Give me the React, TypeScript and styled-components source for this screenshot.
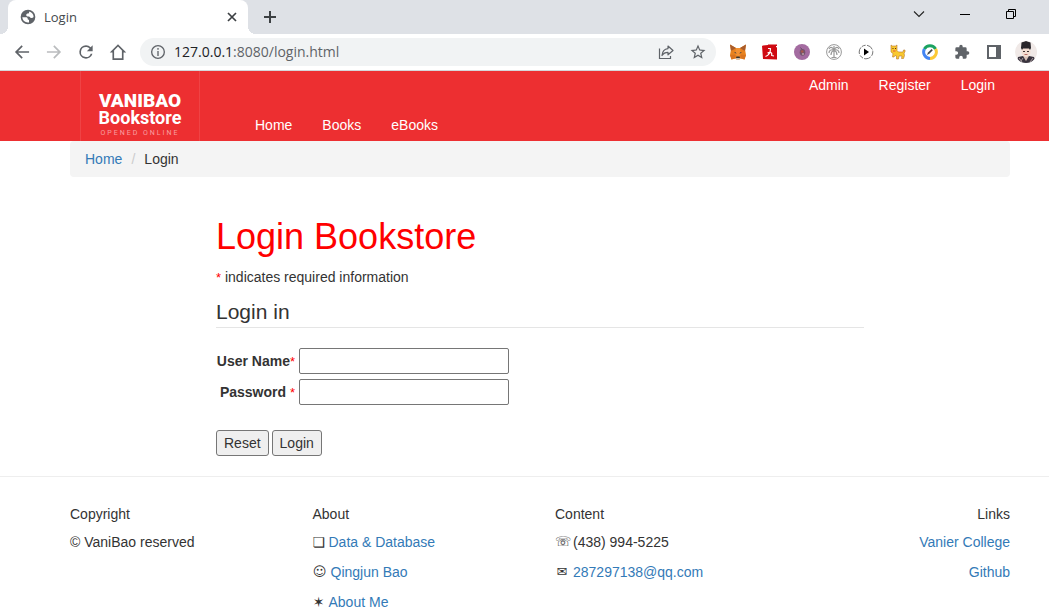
import React from 'react';
import styled, { createGlobalStyle } from 'styled-components';

const GlobalStyle = createGlobalStyle`
  *, *::before, *::after { box-sizing: border-box; }
  body {
    margin: 0;
    overflow: hidden;
    background: #fff;
    color: #333;
    font: 14px/20px "Liberation Sans", Arial, sans-serif;
  }
`;

/* ---------- browser window ---------- */

const TabStrip = styled.div`
  display: flex;
  align-items: center;
  height: 34px;
  padding: 0 8px;
  background: #dee1e6;
`;

const Tab = styled.div`
  position: relative;
  display: flex;
  align-items: center;
  gap: 8px;
  width: 240px;
  height: 34px;
  padding: 0 9px 0 12px;
  border-radius: 8px 8px 0 0;
  background: #fff;
  color: #45494d;
  font: 13px/16px "Open Sans", sans-serif;

  &::before, &::after {
    content: '';
    position: absolute;
    bottom: 0;
    width: 8px;
    height: 8px;
  }
  &::before {
    right: 100%;
    background: radial-gradient(circle at 0 0, transparent 8px, #fff 8px);
  }
  &::after {
    left: 100%;
    background: radial-gradient(circle at 100% 0, transparent 8px, #fff 8px);
  }
`;

const TabTitle = styled.span`
  flex: 1;
`;

const IconButton = styled.button<{ $width?: number }>`
  display: flex;
  flex: none;
  align-items: center;
  justify-content: center;
  width: ${p => p.$width ?? 32}px;
  height: 32px;
  padding: 0;
  border: 0;
  background: none;
  color: #5f6368;
`;

const WindowControls = styled.div`
  display: flex;
  margin: 0 7px 6px auto;
`;

const Toolbar = styled.div`
  display: flex;
  align-items: center;
  height: 37px;
  padding: 0 7px 0 6px;
  border-bottom: 1px solid #d5d7da;
  background: #fff;
`;

const AddressBar = styled.div`
  display: flex;
  flex: 1;
  align-items: center;
  height: 28px;
  margin: 0 6px;
  padding: 0 2px 0 10px;
  border-radius: 14px;
  background: #f1f3f4;
  color: #5f6368;
`;

const Url = styled.span`
  flex: 1;
  margin-left: 8px;
  font: 14px/20px "Open Sans", sans-serif;
`;

const Host = styled.span`
  color: #202124;
`;

/* ---------- bookstore page ---------- */

const Page = styled.div`
  --left: 70px;
  --right: 39px;
`;

const Header = styled.header`
  display: flex;
  height: 70px;
  padding: 0 var(--right) 0 80px;
  background: #ed2f31;
  overflow: hidden;
`;

const Logo = styled.a`
  display: flex;
  flex-direction: column;
  align-items: center;
  width: 120px;
  padding-top: 18px;
  border: solid #ef4345;
  border-width: 0 1px;
  color: #fff;
  font-family: Roboto, sans-serif;
  text-decoration: none;
`;

const LogoName = styled.span`
  height: 19px;
  font-size: 19px;
  font-weight: 900;
  line-height: 23px;
`;

const LogoShop = styled.span`
  height: 20px;
  font-size: 18px;
  font-weight: 700;
  line-height: 20px;
`;

const LogoTagline = styled.span`
  color: #f7a0a1;
  font-size: 7px;
  line-height: 10px;
  letter-spacing: 2px;
`;

const Nav = styled.nav<{ $side: 'main' | 'account' }>`
  display: flex;
  gap: 30px;
  ${p => p.$side === 'main'
    ? 'align-self: flex-end; padding: 0 0 6px 55px;'
    : 'align-self: flex-start; margin-left: auto; padding: 4px 15px 0 0;'}
`;

const NavLink = styled.a`
  color: #fff;
  text-decoration: none;
`;

const Link = styled.a`
  color: #337ab7;
  text-decoration: none;
`;

const Breadcrumb = styled.nav`
  display: flex;
  height: 36px;
  margin: 0 var(--right) 0 var(--left);
  padding: 8px 15px;
  border-radius: 4px;
  background: #f4f4f4;
`;

const Separator = styled.span`
  width: 22px;
  color: #ccc;
  text-align: center;
`;

const Main = styled.main`
  margin: 40px 185px 0 216px;
`;

const Title = styled.h1`
  margin: 0 0 10px;
  color: #f00;
  font-size: 36px;
  font-weight: 400;
  line-height: 40px;
`;

const Note = styled.p`
  margin: 0 0 10px;
`;

const Required = styled.span`
  color: #f00;
  font-size: 13px;
  font-weight: 400;
  line-height: 14px;
`;

const Fields = styled.fieldset`
  margin: 0;
  padding: 0;
  border: 0;
`;

const Legend = styled.legend`
  width: 100%;
  height: 31px;
  margin-bottom: 20px;
  padding: 0;
  border-bottom: 1px solid #e5e5e5;
  font-size: 21px;
  line-height: 30px;
`;

const FieldRow = styled.div`
  display: flex;
  align-items: center;
  gap: 4px;
  margin-bottom: 5px;
`;

const Label = styled.label`
  width: 79px;
  font-weight: 700;
  text-align: right;
  white-space: nowrap;
`;

const TextInput = styled.input`
  width: 210px;
  height: 26px;
  padding: 1px 4px;
  border: 1px solid #767676;
  border-radius: 2px;
  background: #fff;
  font: inherit;
`;

const Buttons = styled.div`
  display: flex;
  gap: 3px;
  margin-top: 20px;
`;

const Button = styled.button`
  height: 26px;
  padding: 1px 7px;
  border: 1px solid #767676;
  border-radius: 3px;
  background: #efefef;
  color: #333;
  font: inherit;
`;

const Footer = styled.footer`
  display: grid;
  grid-template-columns: repeat(4, 1fr);
  gap: 30px;
  margin-top: 20px;
  padding: 27px var(--right) 0 var(--left);
  border-top: 1px solid #eee;
`;

const FooterColumn = styled.section<{ $end?: boolean }>`
  display: flex;
  flex-direction: column;
  align-items: ${p => (p.$end ? 'flex-end' : 'flex-start')};
`;

const FooterTitle = styled.h2`
  margin: 0 0 10px;
  font-size: 14px;
  font-weight: 400;
`;

const FooterLine = styled.p`
  display: flex;
  align-items: center;
  gap: 4px;
  height: 16px;
  margin: 0 0 14px;
  line-height: 16px;
  white-space: nowrap;
`;

const Glyph = styled.span<{ $wide?: boolean }>`
  width: ${p => (p.$wide ? 14 : 12)}px;
  font-family: "DejaVu Sans", sans-serif;
  font-size: ${p => (p.$wide ? 13 : 14)}px;
  text-align: center;
`;

/* ---------- icons ---------- */

const Material = ({ d, size = 20, color = 'currentColor' }: { d: string; size?: number; color?: string }) => (
  <svg width={size} height={size} viewBox="0 0 24 24" fill={color} aria-hidden="true"><path d={d} /></svg>
);

const paths = {
  globe: 'M12 1a11 11 0 1 0 0 22 11 11 0 0 0 0-22zM3.500 12.500h5c2.500 0 3 .8 3 2.200 0 1.200.6 1.600 2 1.600v3.900C8 21 3.800 17.500 3.500 12.500zM20.400 12c-1 1.500-2.700 2-4.200 1.400-1.300-.5-1.500-2-3-2-2.300 0-3.900-.5-3.900-2.300 0-1.600 1.200-2.500 2.700-2.500 1.300 0 1.700-.8 1.700-3 4 .6 6.700 4.200 6.700 8.400z',
  back: 'M20.500 11H7.330l5.590-5.590L11.500 4l-8 8 8 8 1.410-1.410L7.330 13H20.500v-2z',
  forward: 'M12.500 4l-1.410 1.410L16.670 11H3.500v2h13.170l-5.580 5.590L12.500 20l8-8z',
  reload: 'M17.650 6.350A7.950 7.950 0 0 0 12 4a8 8 0 1 0 7.730 10h-2.080A6 6 0 1 1 12 6c1.660 0 3.140.69 4.220 1.780L13 11h7V4l-2.350 2.350z',
  home: 'M12 1.500L1 12.500h3.600V22.500h14.800V12.500H23L12 1.500zM17.200 20.300H6.800V10L12 4.800l5.200 5.200v10.300z',
  info: 'M11 6h2v2.500h-2zM11 10.500h2V18h-2zM12 1.500a10.500 10.500 0 1 0 0 21 10.500 10.500 0 0 0 0-21zm0 19a8.500 8.500 0 1 1 0-17 8.500 8.500 0 0 1 0 17z',
  star: 'M22 9.240l-7.190-.62L12 2 9.190 8.630 2 9.240l5.460 4.730L5.820 21 12 17.270 18.180 21l-1.630-7.030L22 9.240zM12 15.400l-3.760 2.270 1-4.280-3.320-2.880 4.380-.38L12 6.100l1.710 4.040 4.380.38-3.320 2.880 1 4.280L12 15.400z',
  puzzle: 'M20.500 11H19V7a2 2 0 0 0-2-2h-4V3.500a2.500 2.500 0 0 0-5 0V5H4a2 2 0 0 0-1.990 2v3.800H3.500a2.700 2.700 0 0 1 0 5.400H2V20a2 2 0 0 0 2 2h3.800v-1.500a2.700 2.700 0 0 1 5.400 0V22H17a2 2 0 0 0 2-2v-4h1.500a2.500 2.500 0 0 0 0-5z',
};

const CloseIcon = () => (
  <svg width="10" height="10" viewBox="0 0 10 10" stroke="#3c4043" strokeWidth="1.700"><path d="M1 1l8 8M9 1L1 9" /></svg>
);
const PlusIcon = () => (
  <svg width="12" height="12" viewBox="0 0 12 12" stroke="#3c4043" strokeWidth="2"><path d="M0 6h12M6 0v12" /></svg>
);
const ChevronIcon = () => (
  <svg width="12" height="8" viewBox="0 0 12 8" fill="none" stroke="#222" strokeWidth="1.100"><path d="M1 1.500l5 5 5-5" /></svg>
);
const MinimizeIcon = () => (
  <svg width="10" height="10" viewBox="0 0 10 10" stroke="#000"><path d="M0 5.500h10" /></svg>
);
const RestoreIcon = () => (
  <svg width="10" height="10" viewBox="0 0 10 10" fill="none" stroke="#000"><path d="M.5 2.500h7v7h-7zM2.500 2.500v-2h7v7h-2" /></svg>
);
const ShareIcon = () => (
  <svg width="16" height="16" viewBox="0 0 16 16" fill="none" stroke="#5f6368" strokeWidth="1.200">
    <path d="M1.500 4.500v10h11V12" />
    <path d="M10 2l5 4.500-5 4.300V8.300C7.200 8.300 5.300 9.300 4 11.500 4.300 7.800 6.200 5 10 4.600z" strokeLinejoin="round" />
  </svg>
);
const FoxIcon = () => (
  <svg width="16" height="16" viewBox="0 0 16 16">
    <path d="M0 .5L6 4h4l6-3.500-.8 6L16 11l-1.500 4.500-4-1-1 1h-3l-1-1-4 1L0 11l.8-4.500z" fill="#e8821e" />
    <path d="M0 .5L6 4 2 6.500l-1 0zM16 .5L10 4l4 2.500h1z" fill="#a85c2c" />
    <path d="M6 4h4l1 6-3 3-3-3z" fill="#f39132" />
    <path d="M0 11l5.500-.5V14l-4 1.500zM16 11l-5.500-.5V14l4 1.500z" fill="#d9741f" />
    <path d="M4 8l2 .5.4 1.500zM12 8l-2 .5-.4 1.500z" fill="#263746" />
    <path d="M6.500 12.500h3l.5 1.500H6z" fill="#35322f" />
    <path d="M6 14h4l-.5 1.500h-3z" fill="#c9bdb0" />
  </svg>
);
const AcrobatIcon = () => (
  <svg width="16" height="16" viewBox="0 0 16 16">
    <path d="M0 2l1-.5 5-.5v-.5h9V2h-1v1l1 .5V15.500L1 15z" fill="#cf0a12" />
    <path d="M6 4.500h2.500C8.500 8 6.500 11.500 3.500 12.500M5.500 9c2-1 3-1 4.200.2V11.500l2.300.5" fill="none" stroke="#fff" strokeWidth="1.200" strokeLinejoin="round" />
  </svg>
);
const PurpleIcon = () => (
  <svg width="16" height="16" viewBox="0 0 16 16">
    <circle cx="8" cy="8" r="8" fill="#a36ba0" />
    <ellipse cx="8.500" cy="8.300" rx="2.800" ry="3.400" fill="#74546d" />
    <path d="M6.500 3.500l1.500 2" stroke="#634b60" fill="none" />
    <circle cx="8.200" cy="7.500" r="1.300" fill="#a8564b" /><circle cx="9" cy="10" r="1" fill="#b9a0a5" />
  </svg>
);
const PalmIcon = () => (
  <svg width="16" height="16" viewBox="0 0 16 16" fill="none" stroke="#999">
    <circle cx="8" cy="8" r="7.400" />
    <path d="M8 6v8M8 6C6 2.500 4 3 3 5M8 6c2-3.500 4-3 5-1M8 6C4.500 5 3 7 3 9M8 6c3.500-1 5 1 5 3M8 6c-2 1-3 3-3 5M8 6c2 1 3 3 3 5M8 6V2M5.500 13.500h5" strokeWidth="1.200" />
  </svg>
);
const PlayIcon = () => (
  <svg width="16" height="16" viewBox="0 0 16 16">
    <circle cx="8" cy="8" r="6.800" fill="none" stroke="#777" strokeDasharray="4 1.500 7 1.200" />
    <path d="M6 4.500v7L11 8z" fill="#000" />
  </svg>
);
const CatIcon = () => (
  <svg width="16" height="16" viewBox="0 0 16 16">
    <path d="M1 1l1.500 1h3L7 1v5.500L8.500 8H13l.5-2H15v2l-1 1 .5 2.500-1 3h-2l.5-2.500H9L8.500 15h-2V12L5 11.500 4 13H2.500L3 9.500 1 8z" fill="#f9c92f" stroke="#b9772f" strokeWidth=".6" />
    <path d="M2.500 4h1v1h-1zM5 4h1v1H5z" fill="#5b301b" /><path d="M3 6.500h2.500v1H3z" fill="#e55435" />
  </svg>
);
const RingIcon = () => (
  <svg width="16" height="16" viewBox="0 0 16 16" fill="none">
    <path d="M2.400 5A6.500 6.500 0 0 1 13.600 5" stroke="#1aa260" strokeWidth="3" />
    <path d="M13.600 5A6.500 6.500 0 0 1 8 14.500" stroke="#fcc934" strokeWidth="3" />
    <path d="M8 14.500A6.500 6.500 0 0 1 2.400 5" stroke="#4285f4" strokeWidth="3" />
    <path d="M5 11l1-2.400 3.600-3.500 1.200 1.200-3.500 3.500z" fill="#45494d" />
  </svg>
);
const PanelIcon = () => (
  <svg width="14" height="14" viewBox="0 0 14 14"><path d="M0 0h14v14H0zM2 2v10h7V2z" fill="#5f6368" fillRule="evenodd" /></svg>
);
const AvatarIcon = () => (
  <svg width="22" height="22" viewBox="0 0 22 22">
    <clipPath id="avatar"><circle cx="11" cy="11" r="11" /></clipPath>
    <g clipPath="url(#avatar)">
      <path d="M0 0h22v22H0z" fill="#f0e9e7" />
      <path d="M2 22l1-6 5-1h6l5 1 2 6z" fill="#39333e" />
      <path d="M8 15l3 5 3-5z" fill="#d9c2b7" />
      <ellipse cx="11" cy="11" rx="4.500" ry="5" fill="#f3ddd2" />
      <path d="M6 7l.5-5.500L11 0l4.500 1.500L16 7l-1 2-1-1.500H8L7 9z" fill="#28252a" />
      <path d="M8 10.500h2M12 10.500h2" stroke="#3c3030" /><path d="M9.500 13.500h3" stroke="#b86c65" />
      <path d="M4 17l3 4M18 17l-3 4M6 20l2-3" stroke="#a99da0" />
    </g>
  </svg>
);

const extensions = [
  { name: 'Wallet', icon: <FoxIcon /> },
  { name: 'PDF', icon: <AcrobatIcon /> },
  { name: 'Developer tools', icon: <PurpleIcon /> },
  { name: 'Archive', icon: <PalmIcon /> },
  { name: 'Player', icon: <PlayIcon /> },
  { name: 'Cat', icon: <CatIcon /> },
  { name: 'Colour picker', icon: <RingIcon /> },
  { name: 'Extensions', icon: <Material d={paths.puzzle} size={16} /> },
  { name: 'Side panel', icon: <PanelIcon /> },
  { name: 'Profile', icon: <AvatarIcon /> },
];

export default function App() {
  return (
    <>
      <GlobalStyle />
      <TabStrip>
        <Tab>
          <Material d={paths.globe} size={16} color="#5f6368" />
          <TabTitle>Login</TabTitle>
          <IconButton $width={14} aria-label="Close tab"><CloseIcon /></IconButton>
        </Tab>
        <IconButton $width={44} aria-label="New tab"><PlusIcon /></IconButton>
        <WindowControls>
          <IconButton $width={46} aria-label="Search tabs"><ChevronIcon /></IconButton>
          <IconButton $width={46} aria-label="Minimize"><MinimizeIcon /></IconButton>
          <IconButton $width={46} aria-label="Restore"><RestoreIcon /></IconButton>
        </WindowControls>
      </TabStrip>
      <Toolbar>
        <IconButton aria-label="Back"><Material d={paths.back} /></IconButton>
        <IconButton aria-label="Forward"><Material d={paths.forward} color="#babcbe" /></IconButton>
        <IconButton aria-label="Reload"><Material d={paths.reload} /></IconButton>
        <IconButton aria-label="Home"><Material d={paths.home} size={18} /></IconButton>
        <AddressBar>
          <Material d={paths.info} size={16} />
          <Url><Host>127.0.0.1</Host>:8080/login.html</Url>
          <IconButton aria-label="Share"><ShareIcon /></IconButton>
          <IconButton aria-label="Bookmark"><Material d={paths.star} size={18} /></IconButton>
        </AddressBar>
        {extensions.map(e => <IconButton key={e.name} aria-label={e.name}>{e.icon}</IconButton>)}
      </Toolbar>

      <Page>
        <Header>
          <Logo href="#">
            <LogoName>VANIBAO</LogoName>
            <LogoShop>Bookstore</LogoShop>
            <LogoTagline>OPENED ONLINE</LogoTagline>
          </Logo>
          <Nav $side="main">
            <NavLink href="#">Home</NavLink>
            <NavLink href="#">Books</NavLink>
            <NavLink href="#">eBooks</NavLink>
          </Nav>
          <Nav $side="account">
            <NavLink href="#">Admin</NavLink>
            <NavLink href="#">Register</NavLink>
            <NavLink href="#">Login</NavLink>
          </Nav>
        </Header>
        <Breadcrumb>
          <Link href="#">Home</Link>
          <Separator>/</Separator>
          <span>Login</span>
        </Breadcrumb>

        <Main>
          <Title>Login Bookstore</Title>
          <Note><Required>*</Required> indicates required information</Note>
          <form>
            <Fields>
              <Legend>Login in</Legend>
              <FieldRow>
                <Label htmlFor="user">User Name<Required>*</Required></Label>
                <TextInput id="user" type="text" />
              </FieldRow>
              <FieldRow>
                <Label htmlFor="password">Password <Required>*</Required></Label>
                <TextInput id="password" type="password" />
              </FieldRow>
            </Fields>
            <Buttons>
              <Button type="reset">Reset</Button>
              <Button type="button">Login</Button>
            </Buttons>
          </form>
        </Main>

        <Footer>
          <FooterColumn>
            <FooterTitle>Copyright</FooterTitle>
            <FooterLine>© VaniBao reserved</FooterLine>
          </FooterColumn>
          <FooterColumn>
            <FooterTitle>About</FooterTitle>
            <FooterLine><Glyph>❏</Glyph><Link href="#">Data &amp; Database</Link></FooterLine>
            <FooterLine><Glyph $wide>☺</Glyph><Link href="#">Qingjun Bao</Link></FooterLine>
            <FooterLine><Glyph>✶</Glyph><Link href="#">About Me</Link></FooterLine>
          </FooterColumn>
          <FooterColumn>
            <FooterTitle>Content</FooterTitle>
            <FooterLine><Glyph $wide>☏</Glyph>(438) 994-5225</FooterLine>
            <FooterLine><Glyph $wide>✉</Glyph><Link href="#">287297138@qq.com</Link></FooterLine>
          </FooterColumn>
          <FooterColumn $end>
            <FooterTitle>Links</FooterTitle>
            <FooterLine><Link href="#">Vanier College</Link></FooterLine>
            <FooterLine><Link href="#">Github</Link></FooterLine>
          </FooterColumn>
        </Footer>
      </Page>
    </>
  );
}
